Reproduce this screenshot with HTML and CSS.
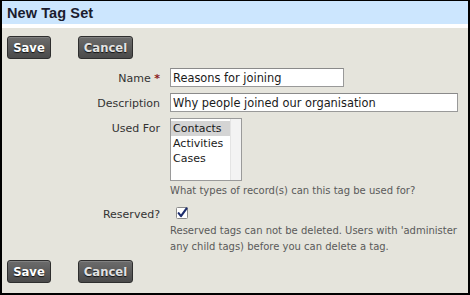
FILE: index.html
```html
<!DOCTYPE html>
<html>
<head>
<meta charset="utf-8">
<link rel="stylesheet" href="styles.css">
</head>
<body>
<div class="frame">
  <div class="header"><h1 class="title">New Tag Set</h1></div>
  <div class="body">
    <div class="buttons">
      <button class="btn btn-save">Save</button>
      <button class="btn btn-cancel">Cancel</button>
    </div>
    <div class="form">
      <label class="lbl">Name <span class="req">*</span></label>
      <div class="field"><input class="text text-name" type="text" value="Reasons for joining"></div>

      <label class="lbl">Description</label>
      <div class="field"><input class="text text-desc" type="text" value="Why people joined our organisation"></div>

      <label class="lbl lbl-top">Used For</label>
      <div class="field">
        <div class="listbox" role="listbox">
          <div class="opts">
            <div class="opt opt-sel">Contacts</div>
            <div class="opt">Activities</div>
            <div class="opt">Cases</div>
          </div>
          <div class="track"></div>
        </div>
        <div class="help help-used">What types of record(s) can this tag be used for?</div>
      </div>

      <label class="lbl lbl-res">Reserved?</label>
      <div class="field field-res">
        <span class="check" role="checkbox" aria-checked="true"><svg width="12" height="12" viewBox="0 0 12 12"><rect x="0.5" y="0.5" width="11" height="11" rx="1" fill="#fff" stroke="#8a8a8a"/><path d="M2.6 6.2 L5 9.2 L10.6 1.4" fill="none" stroke="#1c2c6c" stroke-width="2.1" stroke-linecap="round" stroke-linejoin="round"/></svg></span>
        <div class="help help-res">Reserved tags can not be deleted. Users with 'administer<br>any child tags) before you can delete a tag.</div>
      </div>
    </div>
    <div class="buttons buttons-bottom">
      <button class="btn btn-save">Save</button>
      <button class="btn btn-cancel">Cancel</button>
    </div>
  </div>
</div>
</body>
</html>
```

FILE: styles.css
```css
* { box-sizing: border-box; }
html, body { margin: 0; padding: 0; }
body { width: 470px; height: 295px; overflow: hidden; }

.frame {
  width: 470px;
  height: 295px;
  border-top: 1px solid #000;
  border-left: 2px solid #000;
  border-right: 2px solid #000;
  border-bottom: 2px solid #000;
  background: #e5e4dc;
  overflow: hidden;
  display: flex;
  flex-direction: column;
}

.header {
  height: 23px;
  background: #cce6fe;
  border-bottom: 4px solid #fff;
  box-sizing: content-box;
  padding-left: 5px;
  display: flex;
  align-items: center;
}
.title {
  margin: 0;
  font-family: "Liberation Sans", Arial, sans-serif;
  font-weight: bold;
  font-size: 14.5px;
  color: #1b1c2e;
  letter-spacing: 0.1px;
}

.body {
  flex: 1;
  padding: 8px 0 0 5px;
  display: flex;
  flex-direction: column;
}

.buttons { display: flex; gap: 27px; }
.buttons-bottom { margin-top: 6px; }

.btn {
  height: 23px;
  padding: 0;
  border: 1px solid #2e2e2e;
  border-radius: 3px;
  background: linear-gradient(#6c6c6c, #4a4a4a);
  font-family: "DejaVu Sans", Verdana, sans-serif;
  font-weight: bold;
  font-size: 11.6px;
  text-shadow: 0 1px 1px #111;
  box-shadow: inset 0 1px 0 rgba(255,255,255,0.15);
}
.btn-save { color: #fff; width: 44px; }
.btn-cancel { color: #e2e2e2; width: 55px; }

.form {
  margin-top: 9px;
  margin-left: -5px;
  display: grid;
  grid-template-columns: 158px 1fr;
  column-gap: 10px;
  row-gap: 6px;
  align-items: baseline;
  font-family: "DejaVu Sans", Verdana, sans-serif;
}

.lbl {
  text-align: right;
  font-size: 11px;
  color: #333;
}
.req { color: #8c1c1c; font-weight: bold; }

.text {
  display: block;
  height: 19px;
  padding: 0 2px;
  border: 1px solid #999;
  border-top-color: #8a8a8a;
  background: #fff;
  font-family: "DejaVu Sans", Verdana, sans-serif;
  font-size: 11.4px;
  line-height: 17px;
  color: #1a1a1a;
  outline: none;
}
.text-name { width: 174px; }
.text-desc { width: 288px; }

.listbox {
  width: 72px;
  height: 63px;
  border: 1px solid #9a9a9a;
  background: #fff;
  display: flex;
  font-size: 11px;
  color: #1a1a1a;
}
.opts { flex: 1; padding-top: 2px; }
.opt { line-height: 15px; padding-left: 2px; }
.opt-sel { background: #d4d4d4; }
.track { width: 11px; background: #f3f3f3; border-left: 1px solid #e4e4e4; }

.help {
  font-size: 10px;
  color: #5a5a5a;
}
.help-used { margin-top: 4px; }

.field-res { display: flex; flex-direction: column; }
.check { display: block; width: 12px; height: 12px; margin: 5px 0 0 6px; }
.check svg { display: block; }
.help-res {
  margin-top: 4px;
  white-space: nowrap;
  line-height: 15.5px;
}
.lbl-res { align-self: start; margin-top: 6px; }
```
